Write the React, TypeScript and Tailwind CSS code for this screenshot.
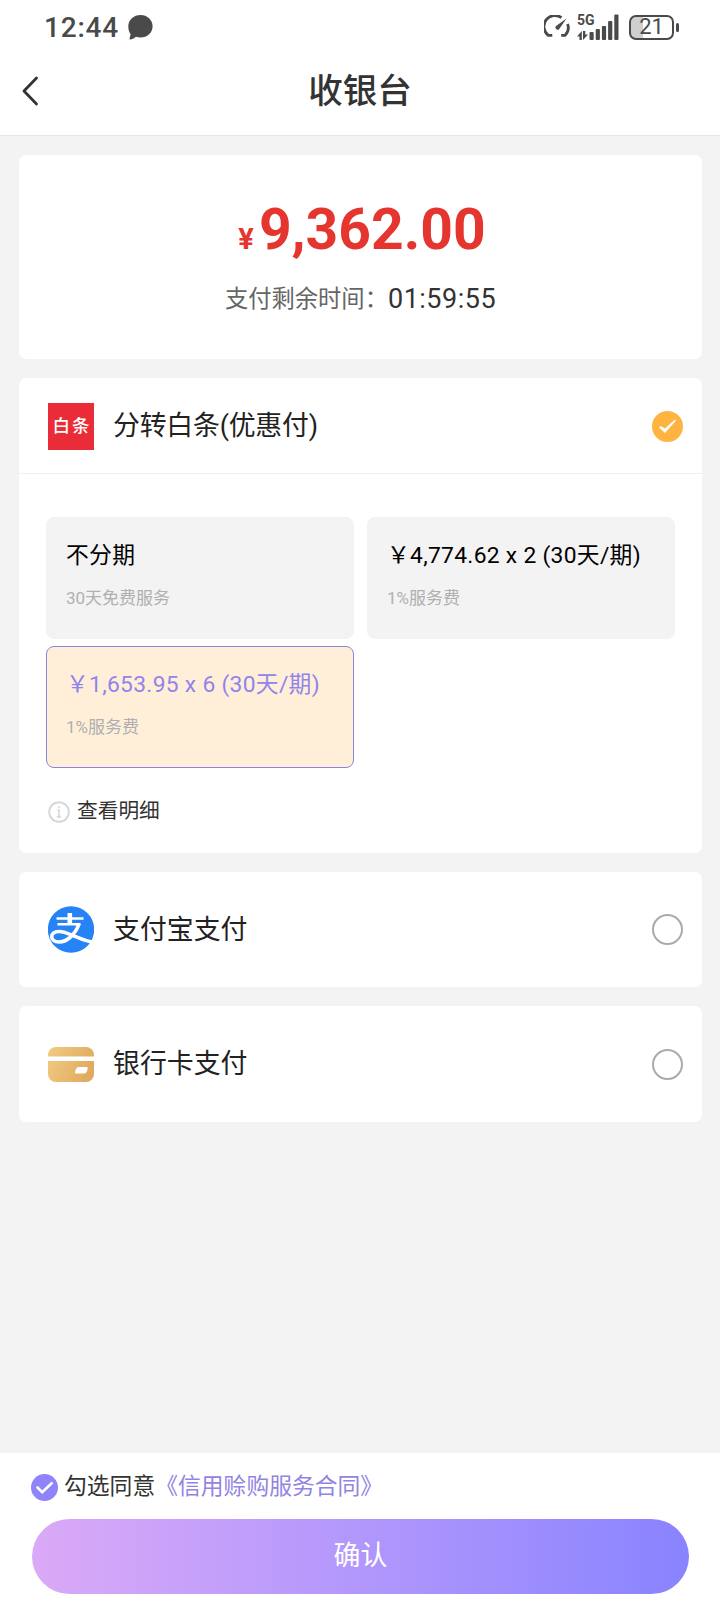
import type { ReactNode } from 'react';

interface PlanProps {
  title: string;
  note: string;
  selected?: boolean;
}

interface MethodProps {
  icon: ReactNode;
  name: string;
  className: string;
}

function StatusBar() {
  return (
    <div className="flex h-[54px] items-center justify-between pr-[41px] pl-[44px] text-[#4a4a4a]">
      <div className="flex items-center">
        <span className="w-[84px] pt-[2px] text-[28px] leading-[52px] font-medium tracking-[0.8px]">12:44</span>
        <svg width="25" height="25" viewBox="0 0 25 25" fill="currentColor">
          <path d="M12.5 0C19.3 0 24.6 4.9 24.6 11.3S19.3 22.6 12.5 22.6c-1.6 0-3.1-.3-4.5-.8-1.700 1.600-4 2.700-6.600 2.700.5-1.900.8-3.700 1.200-5.300C1 17.100.300 14.300.300 11.300.300 4.900 5.700 0 12.500 0Z" />
        </svg>
      </div>

      <div className="flex items-center">
        {/* Network speed gauge */}
        <svg width="26" height="24" viewBox="0 0 26 24" fill="none" stroke="currentColor" strokeWidth="2.800">
          <path d="M17.500 2.700A11 11 0 0 0 4.300 20.300L8.300 20.300" strokeLinejoin="round" />
          <path d="M23.600 9A11 11 0 0 1 21.200 20.300L17.200 20.300" strokeLinejoin="round" />
          <path d="M22.500 3.500 11.700 11.200a2.400 2.400 0 0 0 3.200 3.300Z" fill="currentColor" stroke="none" />
        </svg>
        <div className="ml-[7px] flex h-[26px] w-[43px] items-end">
          <div className="flex h-full w-[12px] flex-col justify-between">
            <span className="text-[14px] leading-[13px] font-bold">5G</span>
            <svg width="11" height="9" viewBox="0 0 11 9" fill="currentColor">
              <path d="M0 5.500 4.800 0v9H2.500V5.500ZM6 0h2.300v3.500H11L6 9Z" />
            </svg>
          </div>
          <svg width="30" height="26" viewBox="0 0 30 26" fill="currentColor">
            <rect x="0.500" y="18" width="4.200" height="8" rx="1" />
            <rect x="6.700" y="15" width="4.200" height="11" rx="1" />
            <rect x="12.900" y="12" width="4.200" height="14" rx="1" />
            <rect x="19.100" y="7" width="4.200" height="19" rx="1" />
            <rect x="25.300" y="0.500" width="4.200" height="25.500" rx="1" />
          </svg>
        </div>
        <div className="ml-[9px] flex items-center gap-[2px]">
          <div className="flex h-[25px] w-[45px] items-center justify-center rounded-[7px] border-2 border-[#4a4a4a] bg-linear-to-r from-[#cfcfcf] from-30% to-white to-30%">
            <span className="text-[22px] leading-[22px]">21</span>
          </div>
          <div className="h-[9px] w-[3px] rounded-full bg-[#4a4a4a]" />
        </div>
      </div>
    </div>
  );
}

function Plan({ title, note, selected }: PlanProps) {
  return (
    <div
      className={
        selected
          ? 'h-[122px] rounded-[8px] border border-[#8f82d8] bg-[#ffefd9] px-[19px] pt-[22px] text-[#9184ea]'
          : 'h-[122px] rounded-[8px] border border-[#f3f3f3] bg-[#f3f3f3] px-[19px] pt-[22px] text-black'
      }
    >
      <div className="text-[22.8px] leading-[32px] tracking-[0.3px] whitespace-nowrap">{title}</div>
      <div className="mt-[14px] text-[17px] leading-[24px] text-[#b0b0b0]">{note}</div>
    </div>
  );
}

function AlipayIcon() {
  return (
    <svg width="46" height="47" viewBox="0 0 46 47" fill="none" stroke="white">
      <circle cx="23" cy="23.500" r="23.200" fill="#2583f5" stroke="none" />
      <path d="M8.500 12.500H35.500M9.500 18.200H32.500" strokeWidth="2.500" />
      <path d="M21.800 7v11" strokeWidth="4.600" />
      <path d="M31 17.800C28 27 20 36 11 36 1.500 36 1 25.500 11 25.500c9 0 16 6.500 32.500 10.500" strokeWidth="3.700" />
    </svg>
  );
}

function BankCardIcon() {
  return (
    <svg width="46" height="35" viewBox="0 0 46 35">
      <defs>
        <linearGradient id="card" x1="0" y1="0.300" x2="1" y2="0.600">
          <stop offset="0" stopColor="#efc97f" />
          <stop offset="1" stopColor="#e0a95e" />
        </linearGradient>
      </defs>
      <rect width="46" height="35" rx="8" fill="url(#card)" />
      <path d="M0 9.500h46v4.500H0Z" fill="white" />
      <path d="M31 20h7.500q1.800 0 1.200 1.700l-1 3q-.6 1.800-2.500 1.800h-8q-1.700 0-1.200-1.600l1.100-3.200Q28.700 20 31 20Z" fill="white" />
    </svg>
  );
}

function Method({ icon, name, className }: MethodProps) {
  return (
    <section className={`flex items-center rounded-[7px] bg-white pr-[19px] pl-[29px] ${className}`}>
      {icon}
      <span className="ml-[19px] flex-1 text-[26.88px] leading-[38px] text-[#222]">{name}</span>
      <span className="size-[31px] rounded-full border-2 border-[#aaa]" />
    </section>
  );
}

export default function App() {
  return (
    <div className="flex h-[1612px] w-[720px] flex-col bg-[#f3f3f3] font-['Roboto','Noto_Sans_CJK_SC',sans-serif]">
      <header className="h-[136px] border-b border-[#e6e6e6] bg-white">
        <StatusBar />
        <div className="grid h-[74px] grid-cols-[60px_1fr_60px] items-center">
          <svg className="ml-[21px]" width="18" height="30" viewBox="0 0 18 30" fill="none" stroke="#333" strokeWidth="2.800" strokeLinecap="round" strokeLinejoin="round">
            <path d="M15.500 2 3 15l12.500 13" />
          </svg>
          <h1 className="pb-px text-center text-[34.56px] leading-[48px] font-medium text-[#333]">收银台</h1>
        </div>
      </header>

      <main className="flex flex-1 flex-col gap-[19px] pt-[19px] pr-[18px] pl-[19px]">
        {/* Amount due */}
        <section className="flex h-[204px] flex-col items-center rounded-[7px] bg-white pt-[42px]">
          <div className="flex items-baseline pl-[3px] font-bold text-[#e5352f]">
            <span className="mr-[5px] text-[29px] leading-none">¥</span>
            <span className="text-[57px] leading-[66px]">9,362.00</span>
          </div>
          <div className="mt-[16px] flex items-center">
            <span className="text-[23.300px] leading-[40px] text-[#666]">支付剩余时间：</span>
            <span className="text-[27px] leading-[40px] tracking-[0.5px] text-[#333]">01:59:55</span>
          </div>
        </section>

        {/* Baitiao instalments */}
        <section className="h-[475px] rounded-[7px] bg-white">
          <div className="flex h-[96px] items-center border-b border-[#f0f0f0] pt-px pr-[19px] pl-[29px]">
            <span className="flex h-[47px] w-[46px] items-center justify-center bg-[#e92c37] pt-px pl-[2px] text-[17.500px] font-medium tracking-[2px] text-white">
              白条
            </span>
            <span className="ml-[19px] flex-1 text-[26.88px] leading-[38px] tracking-[-0.2px] text-[#222]">分转白条(优惠付)</span>
            <svg width="31" height="31" viewBox="0 0 31 31">
              <circle cx="15.500" cy="15.500" r="15.500" fill="#ffb340" />
              <path d="M7 16.500 8.500 15l4.500 2.500L23 8.500l1 1L13 22Z" fill="white" />
            </svg>
          </div>
          <div className="grid grid-cols-2 gap-x-[13px] gap-y-[7px] pt-[43px] pr-[27px] pl-[27px]">
            <Plan title="不分期" note="30天免费服务" />
            <Plan title="￥4,774.62 x 2 (30天/期)" note="1%服务费" />
            <Plan title="￥1,653.95 x 6 (30天/期)" note="1%服务费" selected />
          </div>
          <div className="mt-[28px] flex items-center gap-[7px] pl-[29px]">
            <svg className="mt-[2px]" width="22" height="22" viewBox="0 0 22 22" fill="none" stroke="#d8d8d8">
              <circle cx="11" cy="11" r="9.800" strokeWidth="2" />
              <path d="M11 5v2M9.500 9H11v7M8.800 16h4.400" strokeWidth="1.600" />
            </svg>
            <span className="text-[20.700px] leading-[30px] text-[#333]">查看明细</span>
          </div>
        </section>

        <Method icon={<AlipayIcon />} name="支付宝支付" className="h-[115px]" />
        <Method icon={<BankCardIcon />} name="银行卡支付" className="h-[116px]" />
      </main>

      <footer className="h-[159px] bg-white pr-[31px] pl-[31px]">
        <div className="flex h-[66px] items-center pt-px">
          <svg className="mt-[2px]" width="27" height="27" viewBox="0 0 27 27" fill="none">
            <circle cx="13.500" cy="13.500" r="13.500" fill="#8f84fb" />
            <path d="m6.500 13.500 4.700 4.700 9.500-9" stroke="white" strokeWidth="2.600" strokeLinecap="round" />
          </svg>
          <span className="ml-[6px] text-[22.800px] leading-[32px] text-[#333]">勾选同意</span>
          <a className="text-[22.800px] leading-[32px] text-[#9184e2]">《信用赊购服务合同》</a>
        </div>
        <button className="ml-px h-[75px] w-[657px] rounded-full bg-linear-to-r from-[#dba9f7] to-[#8983ff] text-[26.88px] text-white">
          确认
        </button>
      </footer>
    </div>
  );
}
